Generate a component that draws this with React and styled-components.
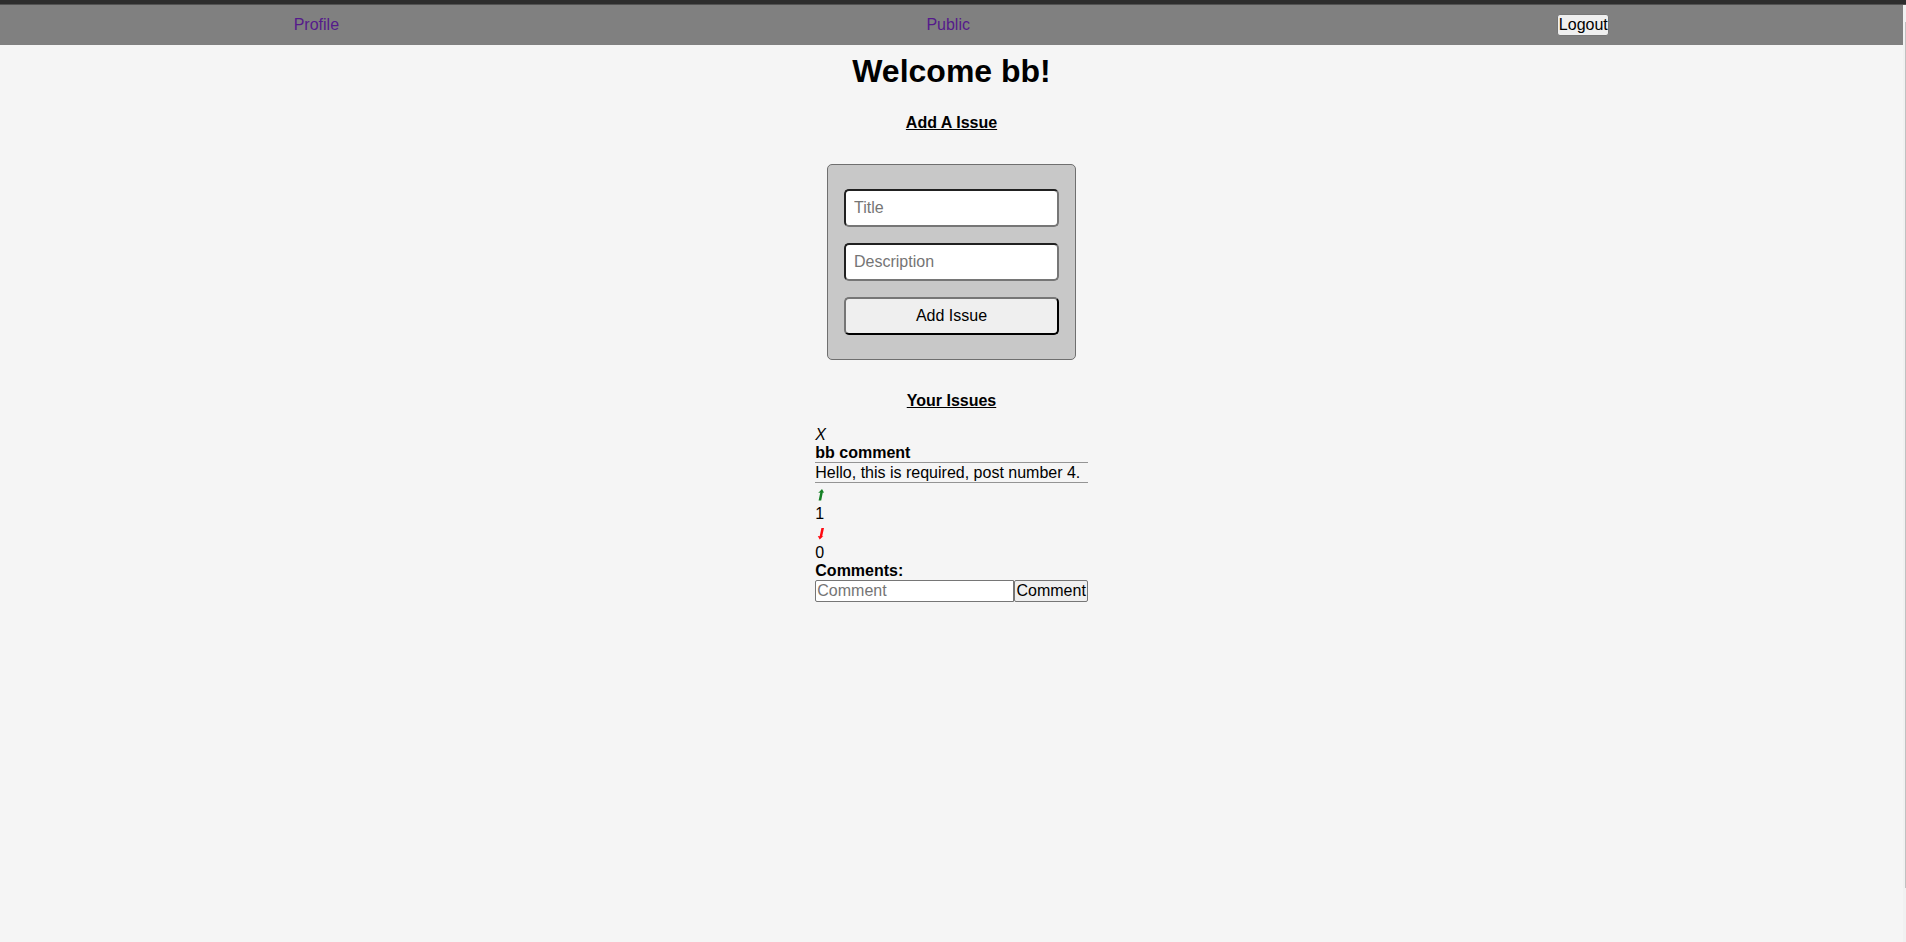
import React from "react";
import styled, { createGlobalStyle } from "styled-components";

const GlobalStyle = createGlobalStyle`
  * { box-sizing: border-box; margin: 0; padding: 0; }
  body { background: whitesmoke; overflow: hidden; }
  body, input, button {
    font-family: "Liberation Sans", Arial, sans-serif;
    font-size: 16px;
    line-height: 18px;
  }
`;

const Screen = styled.div`
  height: 942px;
  display: flex;
  flex-direction: column;
`;

const TopEdge = styled.div`
  flex: none;
  height: 5px;
  background: #2d2d2d;
  border-bottom: 1px solid #525252;
`;

const Viewport = styled.div`
  flex: 1;
  display: flex;
`;

const Page = styled.main`
  flex: 1;
  display: flex;
  flex-direction: column;
  align-items: center;
`;

const ScrollTrack = styled.div`
  width: 3px;
  padding: 17px 0 0 2px;
  background: #f1f1f1;
`;

const ScrollThumb = styled.div`
  height: 866px;
  background: #c1c1c1;
`;

const Navbar = styled.nav`
  width: 100%;
  height: 40px;
  display: flex;
  justify-content: space-around;
  align-items: center;
  background: #808080;
`;

const NavLink = styled.a`
  color: #551a8b;
`;

const LogoutButton = styled.button`
  width: 52px;
  height: 22px;
  padding: 0;
  border: 1px solid #767676;
  border-radius: 3px;
  background: #efefef;
  color: #000;
`;

const Title = styled.h1`
  margin-top: 8px;
  font-size: 32px;
  line-height: 36px;
`;

const SectionTitle = styled.h4`
  margin-top: ${(p) => p.$gap}px;
  text-decoration: underline;
`;

const IssueForm = styled.form`
  width: 249px;
  margin-top: 32px;
  padding: 24px 16px;
  display: flex;
  flex-direction: column;
  gap: 16px;
  background: #c8c8c8;
  border: 1px solid #6f6f6f;
  border-radius: 5px;
`;

const Field = styled.input`
  width: 100%;
  height: 38px;
  padding: 8px;
  background: #fff;
  border: 2px inset #767676;
  border-radius: 5px;
  &::placeholder { color: #757575; }
`;

const SubmitButton = styled.button`
  height: 38px;
  background: #efefef;
  border: 2px outset #767676;
  border-color: #767676 #212121 #212121 #767676;
  border-radius: 5px;
  color: #000;
`;

const Issue = styled.article`
  width: 272.4px;
  margin-top: 16px;
`;

const Remove = styled.em`
  display: block;
`;

const IssueTitle = styled.h4`
  height: 18px;
`;

const Description = styled.p`
  height: 21px;
  border: solid #949494;
  border-width: 1px 0;
  line-height: 19px;
`;

const Vote = styled.div`
  height: 39px;
  padding-top: 21px;
  position: relative;
`;

const Votes = styled.div`
  padding-top: 1px;
`;

const Arrow = styled.svg`
  position: absolute;
  left: 1.7px;
  top: 5px;
`;

const CommentRow = styled.form`
  display: flex;
  height: 22px;
`;

const CommentField = styled.input`
  flex: 1;
  min-width: 0;
  padding: 1px;
  background: #fff;
  border: 1px solid #767676;
  border-radius: 2px 0 0 2px;
  &::placeholder { color: #757575; }
`;

const CommentButton = styled.button`
  width: 74px;
  padding-left: 1px;
  background: #efefef;
  border: 1px solid #767676;
  border-radius: 2px;
  color: #000;
`;

const UpArrow = () => (
  <Arrow width="8" height="12" viewBox="0 0 8 12">
    <path d="M5 0L7.1 3.8L5.8 3.6L4.2 11.5H1.6L3.3 3.5L1.2 3.9Z" fill="#148024" />
  </Arrow>
);

const DownArrow = () => (
  <Arrow width="8" height="12" viewBox="0 0 8 12">
    <path d="M4.4 0H7L5.2 8.2L6.4 8L2.7 11.5L.8 8L2.7 8.3Z" fill="#ff0810" />
  </Arrow>
);

export default function App() {
  return (
    <Screen>
      <GlobalStyle />
      <TopEdge />
      <Viewport>
        <Page>
          <Navbar>
            <NavLink>Profile</NavLink>
            <NavLink>Public</NavLink>
            <LogoutButton>Logout</LogoutButton>
          </Navbar>
          <Title>Welcome bb!</Title>
          <SectionTitle $gap={25}>Add A Issue</SectionTitle>
          <IssueForm>
            <Field placeholder="Title" />
            <Field placeholder="Description" />
            <SubmitButton type="button">Add Issue</SubmitButton>
          </IssueForm>
          <SectionTitle $gap={32}>Your Issues</SectionTitle>
          <Issue>
            <Remove>X</Remove>
            <IssueTitle>bb comment</IssueTitle>
            <Description>Hello, this is required, post number 4.</Description>
            <Votes>
              <Vote><UpArrow />1</Vote>
              <Vote><DownArrow />0</Vote>
            </Votes>
            <h4>Comments:</h4>
            <CommentRow>
              <CommentField placeholder="Comment" />
              <CommentButton type="button">Comment</CommentButton>
            </CommentRow>
          </Issue>
        </Page>
        <ScrollTrack><ScrollThumb /></ScrollTrack>
      </Viewport>
    </Screen>
  );
}
